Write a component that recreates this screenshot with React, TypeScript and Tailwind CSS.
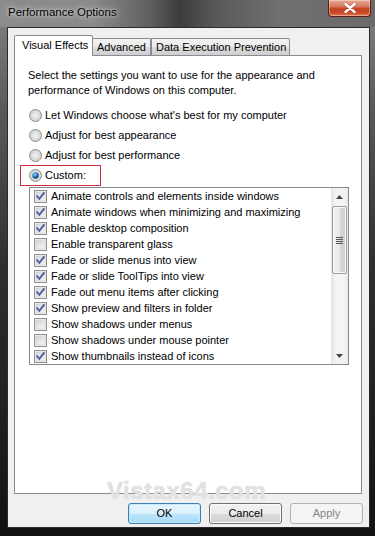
import React from "react";

const FONT = { fontFamily: '"Liberation Sans", Arial, sans-serif' };

function Radio({ checked }: { checked?: boolean }) {
  return (
    <svg width="13" height="13" viewBox="0 0 13 13" className="shrink-0">
      <defs>
        <radialGradient id="rg" cx="0.5" cy="0.5" r="0.5">
          <stop offset="0" stopColor="#f4f4f4" />
          <stop offset="1" stopColor="#cfcfcf" />
        </radialGradient>
        <radialGradient id="rb" cx="0.4" cy="0.35" r="0.6">
          <stop offset="0" stopColor="#9fd4f7" />
          <stop offset="0.6" stopColor="#2a7ac0" />
          <stop offset="1" stopColor="#0d3f7a" />
        </radialGradient>
      </defs>
      <circle cx="6.5" cy="6.5" r="6" fill="url(#rg)" stroke="#8e8f8f" strokeWidth="1" />
      {checked && <circle cx="6.5" cy="6.5" r="3.2" fill="url(#rb)" />}
    </svg>
  );
}

function Check({ checked }: { checked?: boolean }) {
  return (
    <svg width="13" height="13" viewBox="0 0 13 13" className="shrink-0">
      <defs>
        <linearGradient id="cg" x1="0" y1="0" x2="1" y2="1">
          <stop offset="0" stopColor="#d6d6d6" />
          <stop offset="1" stopColor="#f7f7f7" />
        </linearGradient>
      </defs>
      <rect x="0.5" y="0.5" width="12" height="12" fill="#f4f4f4" stroke="#8e8f8f" />
      <rect x="2" y="2" width="9" height="9" fill="url(#cg)" stroke="#c9c9c9" strokeWidth="0.6" />
      {checked && (
        <path d="M3.2 6.4 L5.4 8.8 L9.8 3.2" fill="none" stroke="#4a5f97" strokeWidth="1.9" strokeLinecap="square" />
      )}
    </svg>
  );
}

const items: [string, boolean][] = [
  ["Animate controls and elements inside windows", true],
  ["Animate windows when minimizing and maximizing", true],
  ["Enable desktop composition", true],
  ["Enable transparent glass", false],
  ["Fade or slide menus into view", true],
  ["Fade or slide ToolTips into view", true],
  ["Fade out menu items after clicking", true],
  ["Show preview and filters in folder", true],
  ["Show shadows under menus", false],
  ["Show shadows under mouse pointer", false],
  ["Show thumbnails instead of icons", true],
];

export default function App() {
  return (
    <div
      className="relative w-[375px] h-[536px] overflow-hidden text-[11px] text-black bg-[linear-gradient(to_bottom,#858585_0%,#5a5a5a_20%,#2e2e2e_50%,#1e1e1e_80%,#121212_100%)]"
      style={FONT}
    >
      {/* Title bar */}
      <div className="h-[27px] flex items-center pl-[8px] pb-[1px] bg-[linear-gradient(to_right,#8c8c8c_0%,#8a8a8a_25%,#5e5e5e_40%,#3c3c3c_48%,#5a5a5a_58%,#707070_75%,#6a6a6a_100%)]">
        <span className="text-[11.5px] text-black [text-shadow:0_0_6px_#d8d8d8,0_0_3px_#d0d0d0]">Performance Options</span>
      </div>
      {/* Close button */}
      <div className="absolute top-0 left-[328px] w-[43px] h-[17px] rounded-b-[4px] border border-t-0 border-[#5a2016] bg-[linear-gradient(to_bottom,#e9a895_0%,#d7785e_40%,#c4401f_55%,#c94a2a_80%,#e07a52_100%)] flex items-center justify-center shadow-[0_0_0_1px_rgba(255,255,255,0.35)_inset]">
        <svg width="12" height="10" viewBox="0 0 12 10">
          <path d="M1.5 1 L10.5 9 M10.5 1 L1.5 9" stroke="#3a1008" strokeWidth="3.4" strokeLinecap="round" opacity="0.35" />
          <path d="M1.5 1 L10.5 9 M10.5 1 L1.5 9" stroke="#ffffff" strokeWidth="2.4" strokeLinecap="round" />
        </svg>
      </div>

      {/* Client area */}
      <div className="ml-[7px] w-[363px] h-[501px] border border-[#2b2b2b] bg-[#f0f0f0] flex flex-col">
        {/* Tabs */}
        <div className="flex items-end pl-[6px] pt-[5px] h-[27px] relative z-10">
          <div className="h-[21px] w-[79px] bg-white border border-b-0 border-[#898c95] rounded-t-[2px] flex items-center pl-[7px] -mb-[1px] pb-[2px]">
            Visual Effects
          </div>
          <div className="h-[17px] w-[58px] border border-l-0 border-[#898c95] rounded-tr-[2px] bg-[linear-gradient(to_bottom,#f2f2f2_0%,#ebebeb_50%,#dddddd_51%,#cfcfcf_100%)] flex items-center pl-[4px] border-b-0">
            Advanced
          </div>
          <div className="h-[17px] w-[139px] border border-l-[#898c95] border-[#898c95] rounded-tr-[2px] bg-[linear-gradient(to_bottom,#f2f2f2_0%,#ebebeb_50%,#dddddd_51%,#cfcfcf_100%)] flex items-center pl-[4px] border-b-0">
            Data Execution Prevention
          </div>
        </div>
        {/* Panel */}
        <div className="ml-[6px] w-[348px] h-[439px] bg-white border border-[#898c95] pl-[13px] pt-[12px]">
          <p className="leading-[15px] w-[300px]">
            Select the settings you want to use for the appearance and performance of Windows on this computer.
          </p>
          <div className="mt-[7px] flex flex-col">
            {[
              "Let Windows choose what's best for my computer",
              "Adjust for best appearance",
              "Adjust for best performance",
            ].map((t) => (
              <div key={t} className="h-[20px] flex items-center gap-[3px] pl-[1px]">
                <Radio />
                <span>{t}</span>
              </div>
            ))}
            <div className="h-[20px] flex items-center gap-[3px] pl-[1px] relative">
              <div className="absolute left-[-8px] top-0 w-[81px] h-[21px] border border-[#c8303e]" />
              <Radio checked />
              <span>Custom:</span>
            </div>
          </div>
          {/* List box */}
          <div className="mt-[2px] ml-[1px] w-[320px] h-[178px] border border-[#828790] flex">
            <div className="flex-1 flex flex-col">
              {items.map(([t, c]) => (
                <div key={t} className="h-[16px] flex items-center pl-[4px] gap-[4px]">
                  <Check checked={c} />
                  <span className="whitespace-nowrap">{t}</span>
                </div>
              ))}
            </div>
            {/* Scrollbar */}
            <div className="w-[17px] h-full flex flex-col items-center bg-[linear-gradient(to_right,#e4e4e4,#f4f4f4_30%,#f4f4f4_70%,#e9e9e9)]">
              <div className="h-[17px] w-full flex items-center justify-center">
                <svg width="7" height="4" viewBox="0 0 7 4"><path d="M0 4 L3.5 0 L7 4 Z" fill="#444" /></svg>
              </div>
              <div className="mt-[1px] w-[15px] h-[68px] rounded-[2px] border border-[#9c9c9c] bg-[linear-gradient(to_right,#f3f3f3,#e8e8e8_50%,#d6d6d6_51%,#cfcfcf)] flex items-center justify-center shadow-[inset_0_0_0_1px_#f8f8f8]">
                <div className="flex flex-col gap-[1px]">
                  <div className="w-[7px] h-[1px] bg-[#555]" />
                  <div className="w-[7px] h-[1px] bg-[#555]" />
                  <div className="w-[7px] h-[1px] bg-[#555]" />
                  <div className="w-[7px] h-[1px] bg-[#555]" />
                </div>
              </div>
              <div className="flex-1" />
              <div className="h-[17px] w-full flex items-center justify-center">
                <svg width="7" height="4" viewBox="0 0 7 4"><path d="M0 0 L3.5 4 L7 0 Z" fill="#444" /></svg>
              </div>
            </div>
          </div>
        </div>
        {/* Buttons */}
        <div className="flex justify-end gap-[8px] pr-[6px] mt-[9px]">
          <div className="w-[73px] h-[21px] rounded-[3px] border border-[#3c7fb1] bg-[linear-gradient(to_bottom,#eaf6fd_0%,#d9f0fc_50%,#bee6fd_51%,#a7d9f5_100%)] shadow-[inset_0_0_0_1px_#c6eaff] flex items-center justify-center">
            OK
          </div>
          <div className="w-[73px] h-[21px] rounded-[3px] border border-[#707070] bg-[linear-gradient(to_bottom,#f2f2f2_0%,#ebebeb_50%,#dddddd_51%,#cfcfcf_100%)] shadow-[inset_0_0_0_1px_#fafafa] flex items-center justify-center">
            Cancel
          </div>
          <div className="w-[73px] h-[21px] rounded-[3px] border border-[#adb2b5] bg-[#f4f4f4] text-[#838383] flex items-center justify-center">
            Apply
          </div>
        </div>
      </div>

      {/* Watermark */}
      <div className="absolute left-[107px] top-[473px] text-[24px] font-bold text-[#e2e2e2] tracking-[0.5px] pointer-events-none [text-shadow:0_0_1px_#d0d0d0]">
        Vistax64.com
      </div>
    </div>
  );
}
